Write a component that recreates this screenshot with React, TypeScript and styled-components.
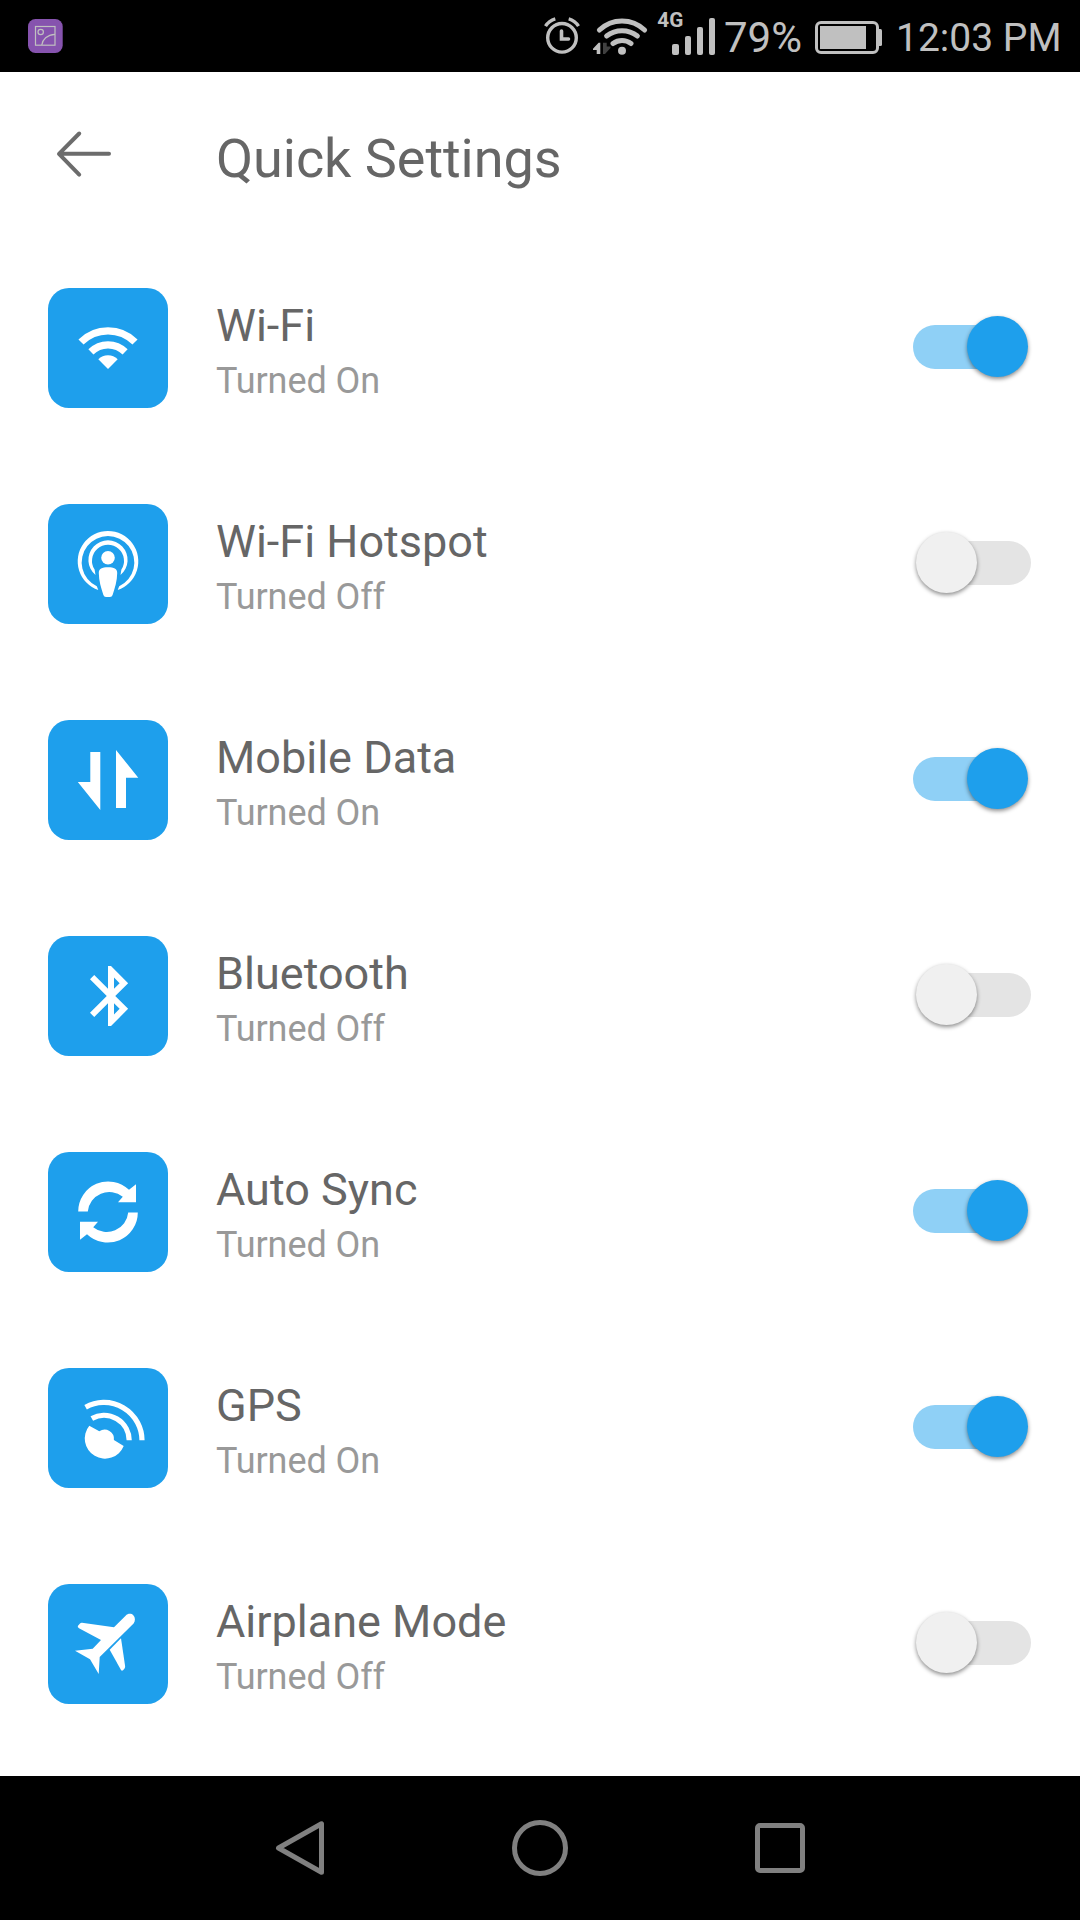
import React from 'react';
import styled, { createGlobalStyle } from 'styled-components';

const BLUE = '#1e9fec';
const STATUS = '#c0c0c0';

const GlobalStyle = createGlobalStyle`
  * { box-sizing: border-box; }
  html, body { margin: 0; padding: 0; background: #fff; }
  body { font-family: Roboto, "Noto Sans", sans-serif; }
  svg { display: block; flex: none; }
`;

const Screen = styled.div`
  display: flex;
  flex-direction: column;
  width: 1080px;
  height: 1920px;
  overflow: hidden;
  background: #fff;
`;

const StatusBar = styled.header`
  display: flex;
  justify-content: space-between;
  flex: none;
  height: 72px;
  padding: 0 20px 0 28px;
  background: #000;
  color: ${STATUS};
`;

const StatusItems = styled.div`
  display: flex;
`;

const StatusText = styled.span<{ $size: number; $width: number; $left: number }>`
  width: ${p => p.$width}px;
  margin-left: ${p => p.$left}px;
  padding-top: 14px;
  font-size: ${p => p.$size}px;
  line-height: 48px;
  white-space: nowrap;
`;

const TitleBar = styled.div`
  display: flex;
  flex: none;
  height: 172px;
  padding-left: 52px;
`;

const BackButton = styled.button`
  width: 164px;
  height: 172px;
  padding: 0;
  border: 0;
  background: none;
`;

const Title = styled.h1`
  margin: 0;
  padding-top: 55px;
  font-size: 54px;
  line-height: 64px;
  font-weight: 400;
  letter-spacing: -0.05px;
  color: #666;
`;

const List = styled.main`
  flex: 1;
  min-height: 0;
`;

const Row = styled.div`
  display: flex;
  align-items: flex-start;
  height: 216px;
  padding: 44px 49px 0 48px;
`;

const Tile = styled.div`
  flex: none;
  width: 120px;
  height: 120px;
  border-radius: 21px;
  background: ${BLUE};
`;

const Labels = styled.div`
  display: flex;
  flex: 1;
  flex-direction: column;
  padding: 11px 0 0 48px;
`;

const Name = styled.span`
  font-size: 45px;
  line-height: 54px;
  color: #666;
`;

const State = styled.span`
  margin-top: 6px;
  font-size: 36px;
  line-height: 44px;
  letter-spacing: -0.08px;
  color: #999;
`;

const Switch = styled.div`
  display: grid;
  flex: none;
  align-items: center;
  width: 118px;
  height: 62px;
  margin-top: 27.5px;
`;

const Track = styled.span<{ $on: boolean }>`
  grid-area: 1 / 1;
  justify-self: ${p => (p.$on ? 'start' : 'end')};
  width: 100px;
  height: 44px;
  border-radius: 22px;
  background: ${p => (p.$on ? '#8fd0f6' : '#e4e4e4')};
`;

const Thumb = styled.span<{ $on: boolean }>`
  grid-area: 1 / 1;
  justify-self: ${p => (p.$on ? 'end' : 'start')};
  width: 61px;
  height: 61px;
  margin: 0 3.5px 0 3px;
  border-radius: 50%;
  background: ${p => (p.$on ? BLUE : '#f0f0f0')};
  box-shadow: 0 2px 4px rgba(0, 0, 0, 0.45);
`;

const NavBar = styled.footer`
  display: flex;
  justify-content: center;
  align-items: center;
  gap: 187px;
  flex: none;
  height: 144px;
  background: #000;
`;

const WifiIcon = () => (
  <g>
    <g fill="none" stroke="#fff" strokeWidth="7.2">
      <path d="M33 54 A38.2 38.2 0 0 1 87 54" />
      <path d="M42.9 63.9 A24.2 24.2 0 0 1 77.1 63.9" />
    </g>
    <path fill="#fff" d="M60 81 L50.3 71.3 A13.7 13.7 0 0 1 69.7 71.3 Z" />
  </g>
);

const HotspotIcon = () => (
  <g fill="#fff">
    <path d="M50.3 86 A30.3 30.3 0 1 1 69.7 86 L71.2 82.2 A26.3 26.3 0 1 0 48.8 82.2 Z" />
    <path d="M47.5 71 A19.6 19.6 0 1 1 72.5 71 L73.4 65.6 A16 16 0 1 0 46.6 65.6 Z" />
    <circle cx="60" cy="53.7" r="6.8" />
    <path d="M60 63.2 C66 63.2 69.2 64.5 69.2 69 C69.2 77 66.8 84 64.6 91 Q64 93 62 93 L58 93 Q56 93 55.4 91 C53.2 84 50.8 77 50.8 69 C50.8 64.5 54 63.2 60 63.2 Z" />
  </g>
);

const DataIcon = () => (
  <path fill="#fff" d="M42.3 32 H52.3 V90 L29.8 62 H42.3 Z M68 30 L90.3 57.7 H78 V88 H68 Z" />
);

const BluetoothIcon = () => (
  <path
    fill="#fff"
    transform="translate(27 24) scale(3)"
    d="M17.71 7.71L12 2h-1v7.59L6.41 5 5 6.41 10.59 12 5 17.59 6.41 19 11 14.41V22h1l5.71-5.71-4.3-4.29 4.3-4.29zM13 5.83l1.88 1.88L13 9.59V5.83zm1.88 10.46L13 18.17v-3.76l1.88 1.88z"
  />
);

const SYNC_ARROW = 'M30.2 59.5 A30 30 0 0 1 81 37.8 L88 32.3 V50.3 H70 L74.8 44.8 A21.5 21.5 0 0 0 39.8 59.5 Z';

const SyncIcon = () => (
  <g fill="#fff">
    <path d={SYNC_ARROW} />
    <path d={SYNC_ARROW} transform="rotate(180 60 60)" />
  </g>
);

const GpsIcon = () => (
  <g>
    <g fill="none" stroke="#fff" strokeWidth="5.2">
      <path d="M37.6 39.2 A38 38 0 0 1 94 72.3" />
      <path d="M43.8 50.4 A25.2 25.2 0 0 1 81.2 72.3" />
    </g>
    <path fill="#fff" d="M41.3 57.7 L51.3 63.3 A9.3 9.3 0 0 1 65.9 72 L75.7 78 A20.2 20.2 0 1 1 41.3 57.7 Z" />
  </g>
);

const PlaneIcon = () => (
  <g fill="#fff">
    <path d="M66 43.3 L77.6 31.7 C79.8 29.4 83.3 29.3 85.3 31.2 C87.4 33.3 87.5 37.2 85.6 39.6 L51.7 73 L50.7 90 L42 75.3 L27 66.7 L44.7 64.7 L53 56 L31 44.3 Q29 43 30 41.8 L32 39.4 Q32.8 38.7 34 38.8 Z" />
    <path d="M73 54.3 L77.1 82 Q77.3 83.6 76.4 84.7 L75 86.3 Q73.8 87.2 73 86 L61.7 65.7 Z" />
  </g>
);

const rows = [
  { name: 'Wi-Fi', on: true, Icon: WifiIcon },
  { name: 'Wi-Fi Hotspot', on: false, Icon: HotspotIcon },
  { name: 'Mobile Data', on: true, Icon: DataIcon },
  { name: 'Bluetooth', on: false, Icon: BluetoothIcon },
  { name: 'Auto Sync', on: true, Icon: SyncIcon },
  { name: 'GPS', on: true, Icon: GpsIcon },
  { name: 'Airplane Mode', on: false, Icon: PlaneIcon },
];

const GalleryBadge = () => (
  <svg width="36" height="72" viewBox="28 0 36 72">
    <rect x="28" y="19" width="34.7" height="34" rx="7.5" fill="#8653ae" />
    <g fill="none" stroke={STATUS} strokeWidth="1.2">
      <rect x="35.5" y="26.5" width="19.5" height="18.7" />
      <circle cx="40.7" cy="32" r="2.7" />
      <path d="M41.8 45 C42.5 39.5 47 34.8 55 34.3" />
    </g>
  </svg>
);

const ConnectivityIcons = () => (
  <svg width="176" height="72" viewBox="542 0 176 72" fill="none" stroke={STATUS}>
    <circle cx="562" cy="37.8" r="14.3" strokeWidth="3.4" />
    <path d="M561.5 31 V39 H568.5" strokeWidth="3.6" strokeLinecap="round" />
    <path d="M545.5 26.2 Q549 20.5 555.3 18.8 M578.5 26.2 Q575 20.5 568.7 18.8" strokeWidth="3.4" />
    <g strokeWidth="5" strokeLinecap="round">
      <path d="M599.4 30 A32.6 32.6 0 0 1 644.6 30" />
      <path d="M606.6 36 A25 25 0 0 1 637.4 36" />
      <path d="M613 43.5 A15 15 0 0 1 631 43.5" />
    </g>
    <g stroke="none" fill={STATUS}>
      <circle cx="622" cy="50.8" r="4" />
      <path d="M600.3 42.7 H598.6 L593 48.7 V50 H596.7 V54 H600.3 Z" />
      <path fill="#404040" d="M603 42.8 H606.7 V46.4 H610.5 V48 L605 54 H603 Z" />
      <rect x="672" y="44" width="7" height="11" rx="2" />
      <rect x="685" y="36" width="6" height="19" rx="2" />
      <rect x="697" y="27" width="6" height="28" rx="2" />
      <rect x="709" y="18" width="6" height="37" rx="2" />
      <text x="657.3" y="26.9" fontFamily="Roboto, sans-serif" fontWeight="700" fontSize="20" textLength="26" lengthAdjust="spacingAndGlyphs">4G</text>
    </g>
  </svg>
);

const BatteryIcon = () => (
  <svg width="68" height="72" viewBox="815 0 68 72">
    <rect x="816.5" y="22.5" width="61" height="30" rx="4.5" fill="none" stroke={STATUS} strokeWidth="3" />
    <rect x="820" y="26" width="46" height="23" fill={STATUS} />
    <path d="M878 29 H880.5 Q882 29 882 30.5 V44.5 Q882 46 880.5 46 H878 Z" fill={STATUS} />
  </svg>
);

export default function App() {
  return (
    <Screen>
      <GlobalStyle />
      <StatusBar>
        <GalleryBadge />
        <StatusItems>
          <ConnectivityIcons />
          <StatusText $size={42} $width={91} $left={6}>79%</StatusText>
          <BatteryIcon />
          <StatusText $size={39} $width={164} $left={13}>12:03 PM</StatusText>
        </StatusItems>
      </StatusBar>
      <TitleBar>
        <BackButton aria-label="Back">
          <svg width="164" height="172" viewBox="52 72 164 172" fill="none" stroke="#6c6c6c" strokeWidth="4" strokeLinecap="round" strokeLinejoin="round">
            <path d="M109 153.8 H59.5 M79.2 133.5 L59 153.8 L79.2 174.6" />
          </svg>
        </BackButton>
        <Title>Quick Settings</Title>
      </TitleBar>
      <List>
        {rows.map(({ name, on, Icon }) => (
          <Row key={name}>
            <Tile>
              <svg width="120" height="120" viewBox="0 0 120 120"><Icon /></svg>
            </Tile>
            <Labels>
              <Name>{name}</Name>
              <State>{on ? 'Turned On' : 'Turned Off'}</State>
            </Labels>
            <Switch role="switch" aria-checked={on}>
              <Track $on={on} />
              <Thumb $on={on} />
            </Switch>
          </Row>
        ))}
      </List>
      <NavBar>
        <svg width="50" height="56" viewBox="0 0 50 56" fill="none" stroke="#808080" strokeWidth="5" strokeLinejoin="round">
          <path d="M46.5 3.8 V52.2 L3.5 28 Z" />
        </svg>
        <svg width="56" height="56" viewBox="0 0 56 56" fill="none" stroke="#808080" strokeWidth="5">
          <circle cx="28" cy="28" r="25.5" />
        </svg>
        <svg width="50" height="50" viewBox="0 0 50 50" fill="none" stroke="#808080" strokeWidth="5">
          <rect x="2.5" y="2.5" width="45" height="45" rx="2.5" />
        </svg>
      </NavBar>
    </Screen>
  );
}
